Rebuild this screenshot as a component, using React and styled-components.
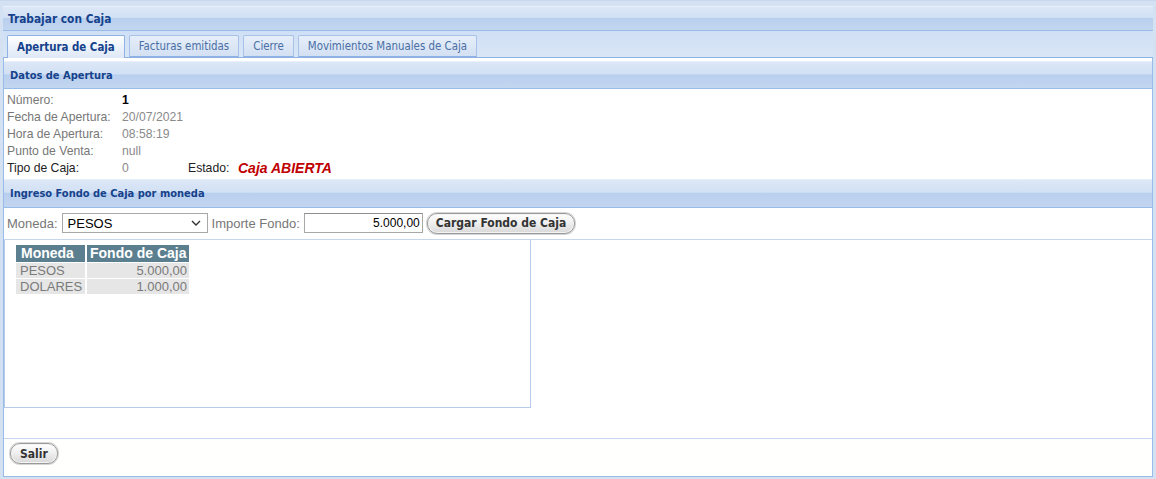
import React from "react";
import styled, { createGlobalStyle } from "styled-components";

const Global = createGlobalStyle`
  html, body { margin: 0; padding: 0; background: #ffffff; }
  body { font-family: "Liberation Sans", Arial, sans-serif; font-size: 12px; }
  * { box-sizing: border-box; }
`;

const tahoma = `"DejaVu Sans Condensed", "DejaVu Sans", Tahoma, sans-serif`;

const Frame = styled.div`
  width: 1156px;
  height: 479px;
  display: flex;
  flex-direction: column;
  background: #d3e1f3;
  padding: 5px 3px 2px 3px;
  border-top: 1px solid #c8d8ee;
`;

const HeaderBar = styled.div`
  height: ${(p) => p.$h || 25}px;
  flex: none;
  display: flex;
  align-items: center;
  padding-left: ${(p) => p.$pl || 5}px;
  font-family: ${tahoma};
  font-weight: bold;
  font-size: ${(p) => p.$fs || 11}px;
  color: #15428b;
  background: linear-gradient(#dce7f6 0%, #d2e1f5 45%, #b9cfee 50%, #c2d6f0 100%);
  border-top: 1px solid #e8f0fb;
  border-bottom: 1px solid #99bbe8;
`;

const TabStrip = styled.div`
  height: 27px;
  flex: none;
  display: flex;
  align-items: flex-end;
  gap: 4px;
  padding-left: 4px;
  background: linear-gradient(#cfdff5, #d9e6f6);
  border-bottom: 1px solid #8db2e3;
`;

const Tab = styled.div`
  height: ${(p) => (p.$active ? 23 : 22)}px;
  margin-bottom: ${(p) => (p.$active ? -1 : 0)}px;
  display: flex;
  align-items: center;
  padding: 0 9px;
  border: 1px solid ${(p) => (p.$active ? "#8db2e3" : "#a6c2e8")};
  border-bottom: ${(p) => (p.$active ? "none" : "1px solid #8db2e3")};
  border-radius: 2px 2px 0 0;
  font-family: ${tahoma};
  font-size: ${(p) => (p.$active ? 11.4 : 11.4)}px;
  font-weight: ${(p) => (p.$active ? "bold" : "normal")};
  color: ${(p) => (p.$active ? "#15428b" : "#4a6fa5")};
  background: ${(p) =>
    p.$active
      ? "linear-gradient(#ffffff, #e6eef9 70%, #dfe8f6)"
      : "linear-gradient(#e6eef9, #d3e0f3)"};
`;

const TabBody = styled.div`
  flex: 1;
  display: flex;
  flex-direction: column;
  background: #ffffff;
  border: 1px solid #99bbe8;
  border-top: none;
  padding-top: 3px;
  background-clip: padding-box;
`;

const Section = styled.div`
  display: flex;
  flex-direction: column;
  flex: ${(p) => (p.$grow ? 1 : "none")};
`;

const DataGrid = styled.div`
  display: grid;
  grid-template-columns: 115px 66px 50px auto;
  grid-auto-rows: 16.8px;
  align-items: center;
  padding: 3px 4px 3px 3px;
  color: #777777;
  font-size: 12.2px;
`;

const Label = styled.span`
  color: ${(p) => (p.$dark ? "#222222" : "#777777")};
  white-space: nowrap;
  grid-column: ${(p) => p.$col || "auto"};
`;

const Value = styled.span`
  color: ${(p) => (p.$bold ? "#000000" : "#8a8a8a")};
  font-weight: ${(p) => (p.$bold ? "bold" : "normal")};
  grid-column: ${(p) => p.$col || "auto"};
  white-space: nowrap;
`;

const Estado = styled.span`
  color: #c00000;
  font-weight: bold;
  font-style: italic;
  font-size: 14px;
  white-space: nowrap;
`;

const FormRow = styled.div`
  height: 32px;
  flex: none;
  display: flex;
  align-items: center;
  padding-left: 3px;
  gap: 4px;
  border-bottom: 1px solid #c5d6ee;
  color: #777777;
  font-size: 13px;
`;

const Select = styled.div`
  width: 146px;
  height: 20px;
  display: flex;
  align-items: center;
  justify-content: space-between;
  padding: 0 6px 0 5px;
  border: 1px solid #a8a8a8;
  color: #000;
  font-size: 13px;
  background: #fff;
`;

const Input = styled.div`
  width: 119px;
  height: 20px;
  display: flex;
  align-items: center;
  justify-content: flex-end;
  padding-right: 2px;
  border: 1px solid #a8a8a8;
  border-top-color: #8e8e8e;
  color: #000;
  font-size: 12px;
`;

const Button = styled.button`
  height: 21px;
  padding: 0 ${(p) => p.$px || 8}px;
  border: 1px solid #9a9a9a;
  border-radius: 10px;
  background: linear-gradient(#ffffff, #f0f0f0 45%, #d8d8d8);
  box-shadow: inset 0 0 0 1px #f4f4f4, 0 0 0 1px #d6d6d6;
  font-family: ${tahoma};
  font-weight: bold;
  font-size: 12px;
  color: #333333;
  display: flex;
  align-items: center;
  margin-left: ${(p) => p.$ml || 0}px;
`;

const GridArea = styled.div`
  flex: 1;
  display: flex;
  flex-direction: column;
`;

const ListBox = styled.div`
  width: 527px;
  height: 168px;
  border: 1px solid #b5cbe8;
  border-top: none;
  padding: 4px 0 0 9px;
  background: #fff;
`;

const Table = styled.table`
  border-collapse: separate;
  border-spacing: 2px 1px;
  table-layout: fixed;
  width: 177px;
`;

const Col = styled.col`
  width: ${(p) => p.$w}px;
`;

const Th = styled.th`
  background: #5b7f8f;
  color: #ffffff;
  font-weight: bold;
  font-size: 14px;
  padding: 0 0 0 ${(p) => p.$pl || 4}px;
  height: 17px;
  line-height: 17px;
  white-space: nowrap;
  text-align: left;
`;

const Td = styled.td`
  background: #e6e6e6;
  color: #7a7a7a;
  font-size: 13px;
  height: 15px;
  line-height: 15px;
  padding: 0 2px 0 4px;
  white-space: nowrap;
  text-align: ${(p) => (p.$right ? "right" : "left")};
`;

const Footer = styled.div`
  height: 38px;
  flex: none;
  display: flex;
  align-items: flex-start;
  padding: 4px 0 0 6px;
  border-top: 1px solid #c5d6ee;
  background: #fffffd;
`;

const Chevron = () => (
  <svg width="10" height="6" viewBox="0 0 10 6" fill="none">
    <path d="M1 1l4 4 4-4" stroke="#333" strokeWidth="1.4" />
  </svg>
);

export default function App() {
  return (
    <>
      <Global />
      <Frame>
        <HeaderBar $fs={11.8}>Trabajar con Caja</HeaderBar>
        <TabStrip>
          <Tab $active>Apertura de Caja</Tab>
          <Tab>Facturas emitidas</Tab>
          <Tab>Cierre</Tab>
          <Tab>Movimientos Manuales de Caja</Tab>
        </TabStrip>
        <TabBody>
          <Section>
            <HeaderBar $h={28} $pl={6}>Datos de Apertura</HeaderBar>
            <DataGrid>
              <Label $col="1">Número:</Label>
              <Value $bold $col="2">1</Value>
              <Label $col="1">Fecha de Apertura:</Label>
              <Value $col="2 / 4">20/07/2021</Value>
              <Label $col="1">Hora de Apertura:</Label>
              <Value $col="2">08:58:19</Value>
              <Label $col="1">Punto de Venta:</Label>
              <Value $col="2">null</Value>
              <Label $col="1" $dark>Tipo de Caja:</Label>
              <Value $col="2">0</Value>
              <Label $col="3" $dark>Estado:</Label>
              <Estado>Caja ABIERTA</Estado>
            </DataGrid>
          </Section>
          <Section $grow>
            <HeaderBar $h={29} $pl={6}>Ingreso Fondo de Caja por moneda</HeaderBar>
            <FormRow>
              <span>Moneda:</span>
              <Select>
                <span>PESOS</span>
                <Chevron />
              </Select>
              <span>Importe Fondo:</span>
              <Input>5.000,00</Input>
              <Button>Cargar Fondo de Caja</Button>
            </FormRow>
            <GridArea>
              <ListBox>
                <Table>
                  <colgroup>
                    <Col $w={69} />
                    <Col $w={102} />
                  </colgroup>
                  <thead>
                    <tr>
                      <Th $pl={5}>Moneda</Th>
                      <Th $pl={3}>Fondo de Caja</Th>
                    </tr>
                  </thead>
                  <tbody>
                    <tr>
                      <Td>PESOS</Td>
                      <Td $right>5.000,00</Td>
                    </tr>
                    <tr>
                      <Td>DOLARES</Td>
                      <Td $right>1.000,00</Td>
                    </tr>
                  </tbody>
                </Table>
              </ListBox>
            </GridArea>
            <Footer>
              <Button $px={9}>Salir</Button>
            </Footer>
          </Section>
        </TabBody>
      </Frame>
    </>
  );
}
